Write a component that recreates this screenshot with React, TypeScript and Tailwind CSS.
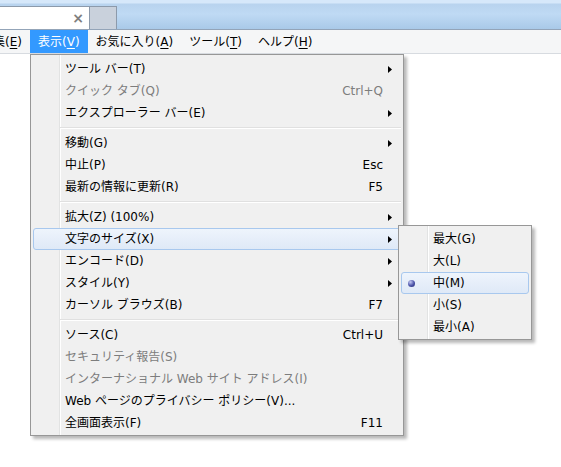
import React from "react";

type Item = {
    label?: string;
    shortcut?: string;
    sub?: boolean;
    disabled?: boolean;
    active?: boolean;
    separator?: boolean;
};

const viewMenu: Item[] = [
    { label: "ツール バー(T)", sub: true },
    { label: "クイック タブ(Q)", shortcut: "Ctrl+Q", disabled: true },
    { label: "エクスプローラー バー(E)", sub: true },
    { separator: true },
    { label: "移動(G)", sub: true },
    { label: "中止(P)", shortcut: "Esc" },
    { label: "最新の情報に更新(R)", shortcut: "F5" },
    { separator: true },
    { label: "拡大(Z) (100%)", sub: true },
    { label: "文字のサイズ(X)", sub: true, active: true },
    { label: "エンコード(D)", sub: true },
    { label: "スタイル(Y)", sub: true },
    { label: "カーソル ブラウズ(B)", shortcut: "F7" },
    { separator: true },
    { label: "ソース(C)", shortcut: "Ctrl+U" },
    { label: "セキュリティ報告(S)", disabled: true },
    { label: "インターナショナル Web サイト アドレス(I)", disabled: true },
    { label: "Web ページのプライバシー ポリシー(V)..." },
    { label: "全画面表示(F)", shortcut: "F11" },
];

const sizeMenu = ["最大(G)", "大(L)", "中(M)", "小(S)", "最小(A)"];

const menuBar = [
    { text: "編集", key: "E" },
    { text: "表示", key: "V", open: true },
    { text: "お気に入り", key: "A" },
    { text: "ツール", key: "T" },
    { text: "ヘルプ", key: "H" },
];

// gutter line drawn in the background, like the classic Win7 menu
const menuBox =
    "absolute border border-[#979797] bg-[#f0f0f0] shadow-[3px_3px_3px_rgba(0,0,0,0.28)] bg-[linear-gradient(to_right,#f0f0f0_28px,#e2e3e3_28px,#e2e3e3_29px,#ffffff_29px,#ffffff_30px,#f0f0f0_30px)]";

const hot = "rounded-[3px] border border-[#a8c8ee] bg-[linear-gradient(to_bottom,#eef4fc,#dfe9f7)]";

const Arrow = () => (
    <svg width="4" height="7" viewBox="0 0 4 7">
        <path d="M0 0 L4 3.5 L0 7 Z" fill="#000" />
    </svg>
);

const MenuRow = ({ item }: { item: Item }) => {
    if (item.separator) {
        return (
            <div className="h-[8px] flex flex-col justify-center ml-[29px] mr-[2px]">
                <div className="h-px bg-[#e0e0e0]" />
                <div className="h-px bg-white" />
            </div>
        );
    }
    const color = item.disabled ? "text-[#7d7d7d]" : "text-black";
    return (
        <div className={`h-[22px] mx-[2px] flex items-center ${item.active ? hot : "border border-transparent"} ${color}`}>
            <span className="pl-[31px] flex-1 whitespace-nowrap">{item.label}</span>
            {item.shortcut && <span className="whitespace-nowrap">{item.shortcut}</span>}
            <span className="w-[17px] pl-[5px] flex items-center">{item.sub && <Arrow />}</span>
        </div>
    );
};

export default function App() {
    return (
        <div
            className="relative w-[561px] h-[467px] overflow-hidden bg-white text-[12px] leading-none"
            style={{ fontFamily: '"DejaVu Sans", "Noto Sans CJK JP", sans-serif' }}
        >
            {/* tab strip */}
            <div className="h-[30px] flex items-end bg-[linear-gradient(to_bottom,#d6e8fa_0px,#d6e8fa_3px,#b8d3ee_4px,#bfdaf4_14px,#a9c9e8_29px)] border-b border-[#93a4b8]">
                <div className="w-[90px] h-[23px] bg-white border-t border-r border-[#8c9aab] flex items-center justify-end pr-[5px]">
                    <span className="text-[#7f7f7f] text-[14px] font-bold">×</span>
                </div>
                <div className="w-[27px] h-[23px] bg-[#c9d1dc] border-t border-r border-[#8c9aab]" />
            </div>

            {/* menu bar */}
            <div className="h-[24px] flex items-stretch bg-[#f5f6f7] border-b border-[#d7dbe0] ml-[-27px]">
                {menuBar.map((m) => (
                    <div
                        key={m.key}
                        className={`flex items-center px-[8px] ${m.open ? "bg-[#3399ff] text-white" : "text-black"}`}
                    >
                        {m.text}(<span className="underline underline-offset-2">{m.key}</span>)
                    </div>
                ))}
            </div>

            {/* 表示 menu */}
            <div className={`${menuBox} left-[30px] top-[54px] w-[374px] pt-[3px] pb-[1px]`}>
                {viewMenu.map((item, i) => (
                    <MenuRow key={i} item={item} />
                ))}
            </div>

            {/* 文字のサイズ submenu */}
            <div className={`${menuBox} left-[398px] top-[225px] w-[134px] pt-[2px] pb-[1px]`}>
                {sizeMenu.map((label) => {
                    const checked = label === "中(M)";
                    return (
                        <div
                            key={label}
                            className={`h-[22px] mx-[2px] flex items-center ${checked ? hot : "border border-transparent"}`}
                        >
                            <span className="w-[31px] flex items-center pl-[6px]">
                                {checked && (
                                    <span className="w-[7px] h-[7px] rounded-full bg-[radial-gradient(circle_at_35%_30%,#c3c8f2,#4a52a8_55%,#262c70)]" />
                                )}
                            </span>
                            <span className="whitespace-nowrap">{label}</span>
                        </div>
                    );
                })}
            </div>
        </div>
    );
}
